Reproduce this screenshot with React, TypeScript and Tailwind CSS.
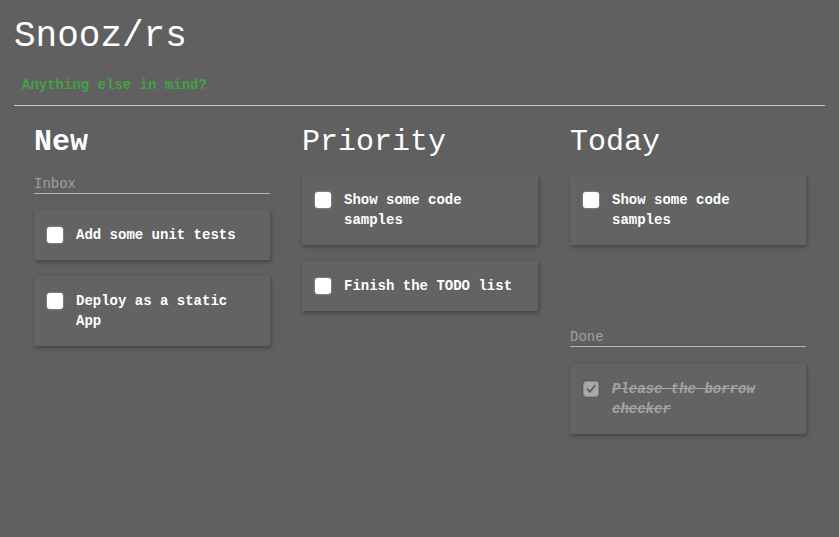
import React from "react";

const mono = { fontFamily: '"Liberation Mono", "Courier New", monospace' };

function Box({ done }: { done?: boolean }) {
  if (done) {
    return (
      <span className="mt-[2px] flex h-[16px] w-[16px] shrink-0 items-center justify-center rounded-[3px] border border-[#8a8a8a] bg-[#a8a8a8] shadow-[0_0_2px_rgba(0,0,0,0.3)]">
        <svg width="12" height="12" viewBox="0 0 12 12">
          <path d="M2.5 6.3 L5 8.8 L9.8 2.8" fill="none" stroke="#5a5a5a" strokeWidth="1.8" strokeLinecap="round" strokeLinejoin="round" />
        </svg>
      </span>
    );
  }
  return <span className="mt-[2px] h-[16px] w-[16px] shrink-0 rounded-[3px] bg-white shadow-[0_0_2px_rgba(255,255,255,0.6)]" />;
}

function Card({ text, done }: { text: string; done?: boolean }) {
  return (
    <div className="flex w-[236px] items-start gap-[13px] bg-[#636363] py-[15px] pl-[13px] pr-[13px] shadow-[1px_2px_4px_rgba(0,0,0,0.3)]">
      <Box done={done} />
      <span
        className={
          done
            ? "text-[14px] font-bold italic leading-[20px] text-[#a3a3a3] line-through"
            : "text-[14px] font-bold leading-[20px] text-white"
        }
      >
        {text}
      </span>
    </div>
  );
}

function Field({ label }: { label: string }) {
  return (
    <div className="h-[19px] border-b border-[#b5b5b5] text-[14px] leading-[18px] text-[#a0a0a0]">{label}</div>
  );
}

export default function App() {
  return (
    <div className="min-h-[537px] w-full bg-[#606060] px-[14px]" style={mono}>
      <h1 className="pt-[19px] text-[36px] leading-[36px] text-white">Snooz/rs</h1>
      <div className="mt-[20px] border-b border-[#c8c8c8] pb-[10px] pl-[8px] text-[14px] font-bold leading-[20px] text-[#45a045]">
        Anything else in mind?
      </div>
      <div className="flex gap-[32px] px-[20px] pt-[18px]">
        <div className="flex w-[236px] flex-col">
          <h2 className="text-[30px] font-bold leading-[36px] text-white">New</h2>
          <div className="mt-[15px]">
            <Field label="Inbox" />
          </div>
          <div className="mt-[16px] flex flex-col gap-[16px]">
            <Card text="Add some unit tests" />
            <Card text="Deploy as a static App" />
          </div>
        </div>
        <div className="flex w-[236px] flex-col">
          <h2 className="text-[30px] leading-[36px] text-white">Priority</h2>
          <div className="mt-[15px] flex flex-col gap-[16px]">
            <Card text="Show some code samples" />
            <Card text="Finish the TODO list" />
          </div>
        </div>
        <div className="flex w-[236px] flex-col">
          <h2 className="text-[30px] leading-[36px] text-white">Today</h2>
          <div className="mt-[15px] flex flex-col gap-[16px]">
            <Card text="Show some code samples" />
          </div>
          <div className="mt-[83px]">
            <Field label="Done" />
          </div>
          <div className="mt-[17px] flex flex-col gap-[16px]">
            <Card text="Please the borrow checker" done />
          </div>
        </div>
      </div>
    </div>
  );
}
